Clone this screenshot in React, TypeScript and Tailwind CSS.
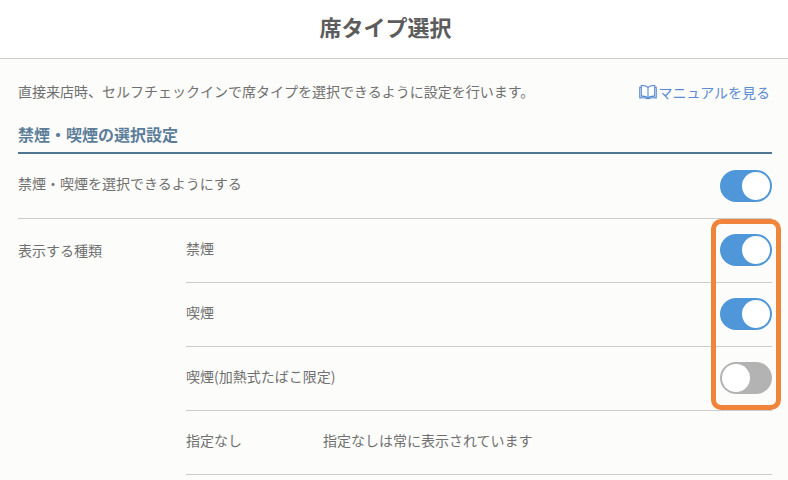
function Toggle({ on }: { on: boolean }) {
  return (
    <div
      className={`flex h-8 w-[52px] rounded-full border-2 ${
        on
          ? "justify-end border-[#4f97d8] bg-[#4f97d8]"
          : "justify-start border-[#b3b3b3] bg-[#b3b3b3]"
      }`}
    >
      <div className="h-7 w-7 rounded-full bg-white" />
    </div>
  );
}

function BookIcon() {
  return (
    <svg
      width="18"
      height="16"
      viewBox="0 0 19 16"
      fill="none"
      stroke="#4f83d1"
      strokeWidth="1.1"
      className="mr-[1px]"
    >
      <path d="M9.5 3.2C8 1.6 5 1 2.4 1.2V12.4C5 12.2 8 12.8 9.5 14.2C11 12.8 14 12.2 16.6 12.4V1.2C14 1 11 1.6 9.5 3.2Z" />
      <path d="M9.5 3.2V14.2" />
      <path d="M2.4 3H0.8V14.2C4 13.8 7 14.2 9.5 15C12 14.2 15 13.8 18.2 14.2V3H16.6" />
    </svg>
  );
}

function TypeRow({ label, note, on }: { label: string; note?: string; on?: boolean }) {
  return (
    <div className="flex h-16 items-center justify-between border-b border-[#cccccc]">
      <div className="flex -translate-y-[3px]">
        <span className="w-[137px] whitespace-nowrap">{label}</span>
        {note && <span>{note}</span>}
      </div>
      {on !== undefined && (
        <div className="mb-px">
          <Toggle on={on} />
        </div>
      )}
    </div>
  );
}

export default function App() {
  return (
    <div
      className="relative h-[480px] w-[788px] overflow-hidden bg-[#fcfcfa] text-[14px] leading-5 text-[#707070]"
      style={{ fontFamily: '"Noto Sans CJK JP", "Liberation Sans", sans-serif' }}
    >
      <header className="flex h-[59px] items-center justify-center border-b border-[#cccccc] bg-white pr-[17px] pb-[7px]">
        <h1 className="text-[22px] font-bold text-[#5c5c5c]">席タイプ選択</h1>
      </header>

      <div className="pl-[18px] pr-4">
        <div className="flex h-[65px] items-center justify-between">
          <p className="-translate-y-px">
            直接来店時、セルフチェックインで席タイプを選択できるように設定を行います。
          </p>
          <a className="flex items-center pr-[2px] text-[#5a8bd6]">
            <BookIcon />
            マニュアルを見る
          </a>
        </div>

        <h2 className="border-b-2 border-[#507694] pb-[8px] text-[16px] leading-[20px] font-bold text-[#5b7d99]">
          禁煙・喫煙の選択設定
        </h2>

        <div className="flex h-[65px] items-center justify-between border-b border-[#cccccc]">
          <span className="-translate-y-[3px]">禁煙・喫煙を選択できるようにする</span>
          <Toggle on />
        </div>

        <div className="flex">
          <div className="w-[168px] pt-[21px]">表示する種類</div>
          <div className="flex-1">
            <TypeRow label="禁煙" on />
            <TypeRow label="喫煙" on />
            <TypeRow label="喫煙(加熱式たばこ限定)" on={false} />
            <TypeRow label="指定なし" note="指定なしは常に表示されています" />
          </div>
        </div>
      </div>

      <div className="absolute top-[219px] left-[711px] h-[191px] w-[70px] rounded-[10px] border-[5px] border-[#f0843a]" />
    </div>
  );
}
